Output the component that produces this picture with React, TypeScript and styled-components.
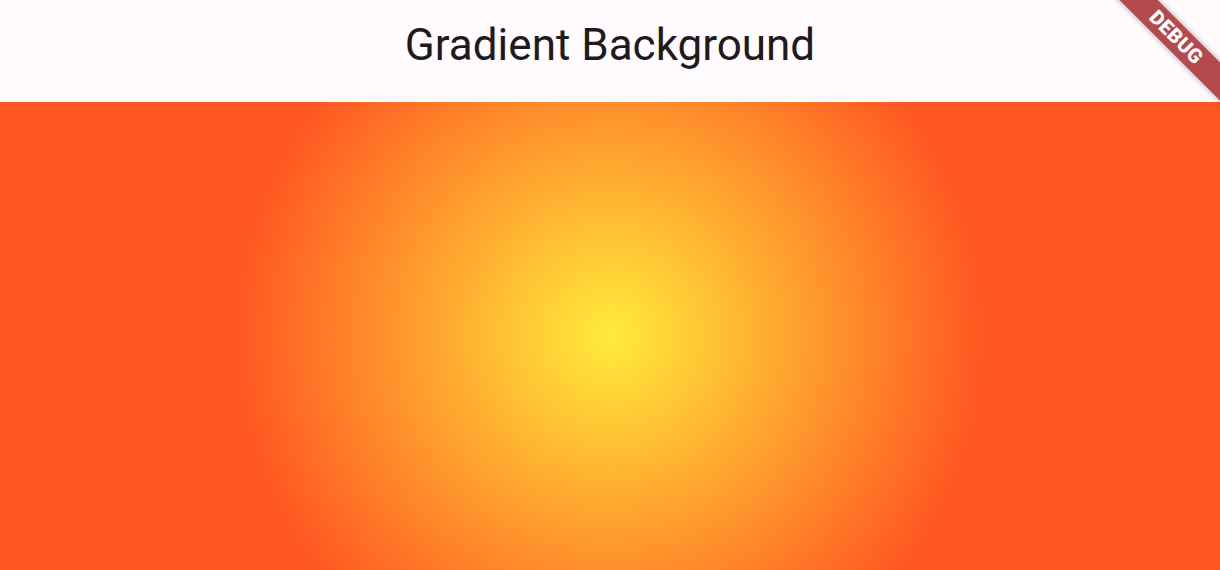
import React from "react";
import styled, { createGlobalStyle } from "styled-components";

const Global = createGlobalStyle`
  html, body { margin: 0; padding: 0; }
  body { width: 1220px; height: 570px; overflow: hidden; font-family: Roboto, "Noto Sans", sans-serif; }
`;

const Page = styled.div`
  position: relative;
  width: 1220px;
  height: 570px;
  display: flex;
  flex-direction: column;
  overflow: hidden;
`;

const AppBar = styled.header`
  height: 102px;
  flex: 0 0 102px;
  background: #fffbfe;
  display: flex;
  align-items: center;
  justify-content: center;
`;

const Title = styled.h1`
  margin: 0;
  font-family: Roboto, sans-serif;
  font-weight: 400;
  font-size: 44px;
  color: #1d1b20;
  letter-spacing: 0;
  transform: translateY(-6px);
`;

const Body = styled.main`
  flex: 1;
  background: radial-gradient(circle 374px at 50% 50%, #ffeb3b 0%, #ff5722 100%);
`;

const BannerClip = styled.div`
  position: absolute;
  top: 0;
  right: 0;
  width: 140px;
  height: 140px;
  overflow: hidden;
  pointer-events: none;
`;

const Ribbon = styled.div`
  position: absolute;
  width: 220px;
  height: 27px;
  left: -14px;
  top: 23.5px;
  transform: rotate(45deg);
  background: #b24a4e;
  box-shadow: 0 0 6px rgba(0, 0, 0, 0.35);
  color: #fff;
  font-family: Roboto, sans-serif;
  font-weight: 900;
  font-size: 20px;
  line-height: 27px;
  text-align: center;
  letter-spacing: 0.5px;
`;

export default function App() {
  return (
    <>
      <Global />
      <Page>
        <AppBar>
          <Title>Gradient Background</Title>
        </AppBar>
        <Body />
        <BannerClip>
          <Ribbon>DEBUG</Ribbon>
        </BannerClip>
      </Page>
    </>
  );
}
